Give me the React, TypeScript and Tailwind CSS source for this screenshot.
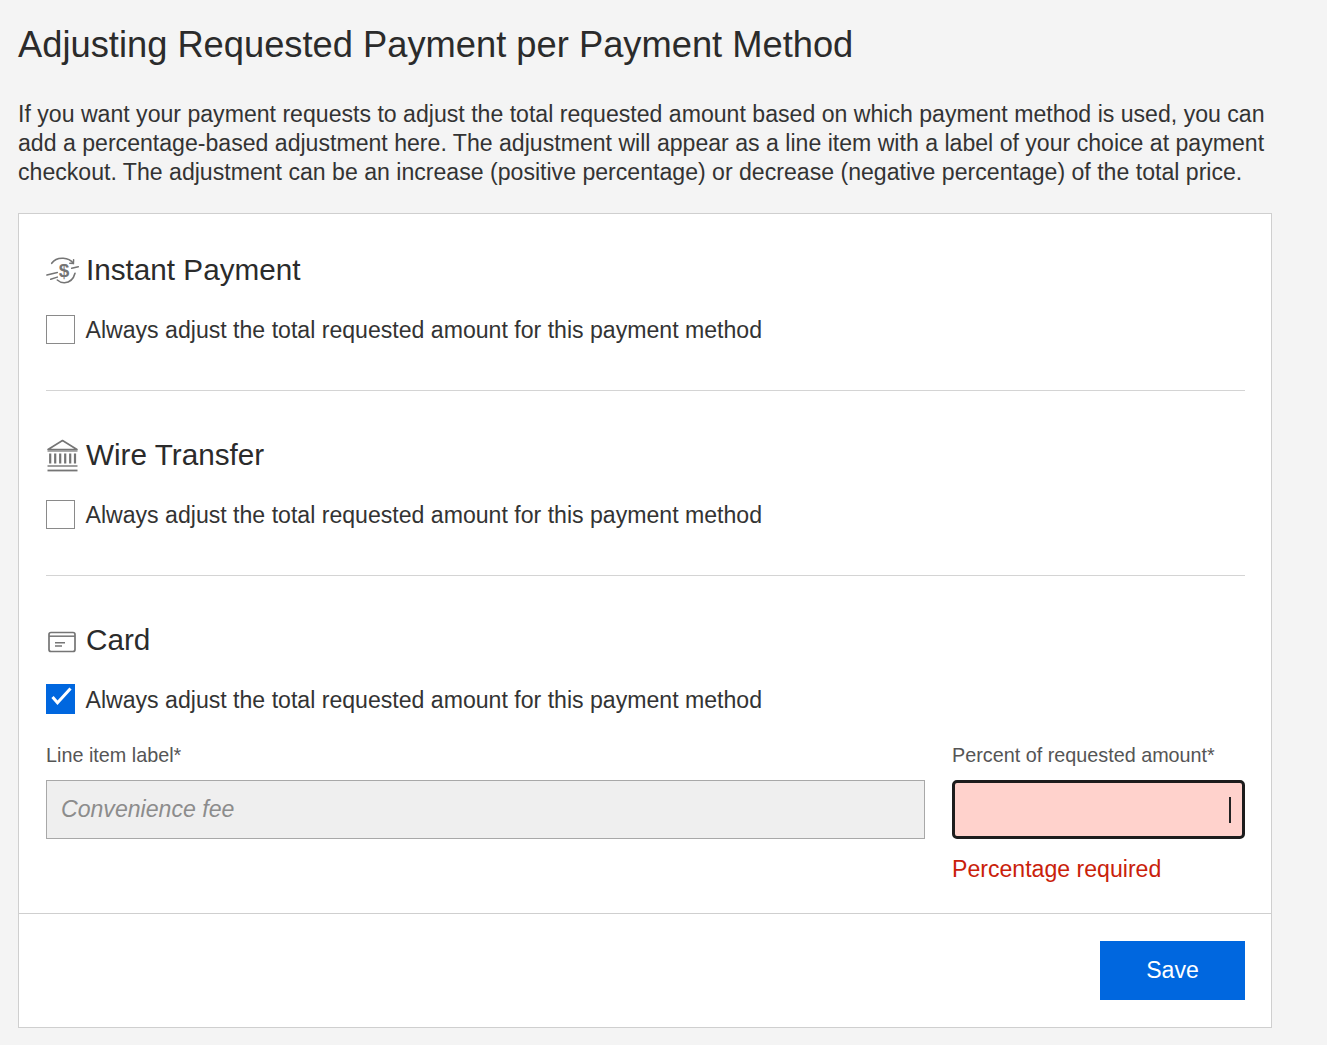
import React from "react";

function InstantIcon() {
  return (
    <svg width="34" height="34" viewBox="0 0 34 34" fill="none" stroke="#757575" strokeLinecap="round">
      <path d="M5.7 10.3C8 7 12.5 5 17.3 5.3C21.5 5.5 25 7.3 27.3 10.3" strokeWidth="1.6" />
      <path d="M27.6 6.8l-.2 3.7-3.6-.3" strokeWidth="1.5" />
      <path d="M29 20.3C27.5 26 23.5 29.5 18.5 29.7C16 29.8 13.3 28.8 11.3 27" strokeWidth="1.6" />
      <path d="M.9 22l10.4-2.5M4.7 26.3l6.6-2.2M25.7 15.3l6.6-1.6" strokeWidth="1.5" />
      <text x="18" y="23.5" textAnchor="middle" fill="#757575" stroke="none" fontSize="19" fontWeight="700" fontFamily="'Liberation Sans', sans-serif">$</text>
    </svg>
  );
}

function BankIcon() {
  return (
    <svg width="34" height="34" viewBox="0 0 34 34" fill="none" stroke="#757575">
      <path d="M2 11.5L16.5 2.5L31 11.5Z" strokeWidth="1.6" strokeLinejoin="round" />
      <path d="M1.5 13h30" strokeWidth="1.2" />
      <path d="M4.2 15.5v10M9.2 15.5v10M14.2 15.5v10M19.2 15.5v10M24.2 15.5v10M29 15.5v10" strokeWidth="2.2" />
      <path d="M1.5 28h30" strokeWidth="1.4" />
      <path d="M1.5 32.5h30" strokeWidth="1.8" />
    </svg>
  );
}

function CardIcon() {
  return (
    <svg width="28" height="26" viewBox="0 0 28 26" fill="none" stroke="#757575">
      <rect x="1" y="5.5" width="26" height="19" rx="2" strokeWidth="1.7" />
      <path d="M1 9.2h26" strokeWidth="1.5" />
      <path d="M7 15.7h10M7 19h7" strokeWidth="1.4" />
    </svg>
  );
}

function Check({ checked }: { checked?: boolean }) {
  return (
    <span
      className={
        checked
          ? "mb-[1px] block h-[30px] w-[29px] shrink-0 bg-[#0067df]"
          : "h-[29px] w-[29px] shrink-0 border border-[#8a8a8a] bg-white"
      }
    >
      {checked && (
        <svg width="29" height="30" viewBox="0 0 29 30" fill="none" stroke="#fff" strokeWidth="3">
          <path d="M6.5 13l5 5.8L24.5 4.5" />
        </svg>
      )}
    </span>
  );
}

function Method({
  icon,
  title,
  checked,
  iconClass,
}: {
  icon: React.ReactNode;
  title: string;
  checked?: boolean;
  iconClass?: string;
}) {
  return (
    <div>
      <div className="flex h-[36px] items-center">
        <span className={iconClass ?? "flex w-[40px]"}>{icon}</span>
        <h2 className="text-[29.7px] leading-[36px] text-[#2b2b2b]">{title}</h2>
      </div>
      <label className="mt-[27px] flex h-[29px] items-center gap-[10.5px] text-[23.1px] text-[#333]">
        <Check checked={checked} />
        <span className="pt-[2px]">Always adjust the total requested amount for this payment method</span>
      </label>
    </div>
  );
}

export default function App() {
  return (
    <div className="h-[1045px] overflow-hidden bg-[#f4f4f4] pl-[18px] pr-[55px] font-['Liberation_Sans',sans-serif]">
      <h1 className="pt-[23px] text-[36.3px] leading-[44px] text-[#2b2b2b]">
        Adjusting Requested Payment per Payment Method
      </h1>
      <p className="mt-[33px] text-[23.1px] leading-[29px] text-[#333]">
        If you want your payment requests to adjust the total requested amount based on which payment method is used, you can add a percentage-based adjustment here. The adjustment will appear as a line item with a label of your choice at payment checkout. The adjustment can be an increase (positive percentage) or decrease (negative percentage) of the total price.
      </p>

      <div className="mt-[26px] border border-[#cfcfcf] bg-white">
        <div className="pl-[27px] pr-[26px] pt-[38px]">
          <Method icon={<InstantIcon />} title="Instant Payment" />
          <div className="mt-[46px] border-t border-[#d4d4d4]" />
          <div className="pt-[46px]">
            <Method icon={<BankIcon />} title="Wire Transfer" />
          </div>
          <div className="mt-[46px] border-t border-[#d4d4d4]" />
          <div className="pt-[46px]">
            <Method icon={<CardIcon />} title="Card" checked iconClass="flex w-[40px] pl-[2px]" />
          </div>
          <div className="mt-[29px] flex gap-[27px] pb-[29px]">
            <div className="flex-1">
              <label className="block text-[19.8px] leading-[24px] text-[#555]">Line item label*</label>
              <div className="mt-[13px] flex h-[59px] items-center border border-[#a8a8a8] bg-[#efefef] px-[14px] text-[23.1px] italic text-[#8c8c8c]">
                Convenience fee
              </div>
            </div>
            <div className="w-[293px]">
              <label className="block text-[19.8px] leading-[24px] text-[#555]">Percent of requested amount*</label>
              <div className="mt-[13px] flex h-[59px] items-center justify-end rounded-[5px] border-[3px] border-[#1c1c1c] bg-[#ffd2cc] pr-[11px]">
                <span className="h-[26px] w-[2px] bg-[#222]" />
              </div>
              <p className="mt-[16px] text-[23.1px] leading-[29px] text-[#c9210a]">Percentage required</p>
            </div>
          </div>
        </div>
        <div className="flex justify-end border-t border-[#cfcfcf] px-[26px] py-[27px]">
          <button className="h-[59px] w-[145px] bg-[#0067df] text-[23.1px] text-white">Save</button>
        </div>
      </div>
    </div>
  );
}
